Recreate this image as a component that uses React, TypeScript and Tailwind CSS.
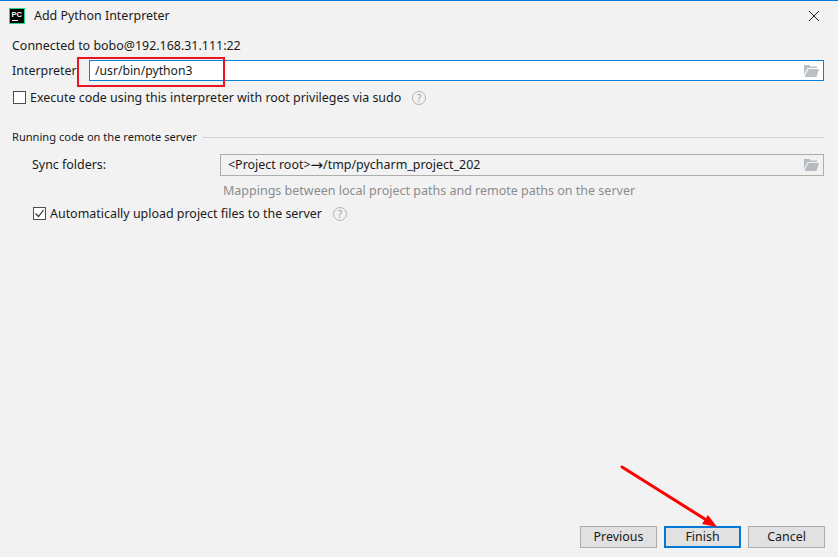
import React from "react";

function Folder({ color }: { color: string }) {
  return (
    <svg width="15" height="12" viewBox="0 0 15 12" className="shrink-0">
      <path d="M0 0 H5.5 L6.5 1.5 H13 V3 H3.5 L0 10 Z" fill={color} />
      <path d="M4.3 4 H15 L12.5 12 H0.5 Z" fill={color} />
    </svg>
  );
}

function Help() {
  return (
    <span className="flex h-[14px] w-[14px] items-center justify-center rounded-full border border-[#b5b5b5] text-[10px] leading-none text-[#9a9a9a]">
      ?
    </span>
  );
}

function Btn({ label, primary }: { label: string; primary?: boolean }) {
  return (
    <button
      className={
        primary
          ? "flex h-[22px] w-[77px] items-center justify-center border-2 border-[#0078d7] bg-[#e1e1e1] text-[#1a1a1a]"
          : "flex h-[22px] w-[77px] items-center justify-center border border-[#adadad] bg-[#e1e1e1] text-[#1a1a1a]"
      }
    >
      {label}
    </button>
  );
}

export default function App() {
  return (
    <div className="relative flex h-[557px] w-[838px] flex-col overflow-hidden border-t border-[#0078d7] bg-[#f2f2f2] font-['Noto_Sans',sans-serif] text-[12.45px] leading-[18px] text-[#1a1a1a]">
      {/* title bar */}
      <div className="flex h-[30px] shrink-0 items-center pl-[9px] pr-[19px]">
        <svg width="16" height="16" viewBox="0 0 16 16" className="shrink-0">
          <rect width="16" height="16" fill="#21d789" />
          <rect x="1" y="1" width="14" height="14" fill="#000" />
          <rect x="3" y="12" width="6" height="1" fill="#fff" />
          <text x="2.5" y="9" fontSize="7.5" fontWeight="700" fill="#fff" fontFamily="Liberation Sans">PC</text>
        </svg>
        <span className="ml-[9px] flex-1">Add Python Interpreter</span>
        <svg width="10" height="10" viewBox="0 0 10 10">
          <path d="M0 0 L10 10 M10 0 L0 10" stroke="#1a1a1a" strokeWidth="1" />
        </svg>
      </div>

      {/* body */}
      <div className="flex flex-1 flex-col pl-3 pr-[14px]">
        <div className="mt-[6px] h-[18px]">Connected to bobo@192.168.31.111:22</div>

        <div className="mt-[5px] flex h-[21px] items-center">
          <span className="w-[77px]">Interpreter</span>
          <div className="flex h-[21px] flex-1 items-center border border-[#0a7fdc] bg-white pl-[5px] pr-[4px]">
            <span className="flex-1 text-[12.2px]">/usr/bin/python3</span>
            <Folder color="#bcc1c5" />
          </div>
        </div>

        <div className="mt-[10px] flex h-[13px] items-center pl-px">
          <span className="h-[13px] w-[13px] border border-[#4d4d4d] bg-white" />
          <span className="ml-[4px]">Execute code using this interpreter with root privileges via sudo</span>
          <span className="ml-[11px]"><Help /></span>
        </div>

        <div className="mt-[24px] flex h-[18px] items-center">
          <span className="text-[11.1px]">Running code on the remote server</span>
          <span className="ml-[6px] h-px flex-1 bg-[#d0d0d0]" />
        </div>

        <div className="mt-[8px] flex h-[22px] items-center pl-5">
          <span className="w-[188px]">Sync folders:</span>
          <div className="flex h-[22px] flex-1 items-center border border-[#adadad] bg-[#f2f2f2] pl-[7px] pr-[4px]">
            <span className="flex flex-1 items-center">
              &lt;Project root&gt;
              <span className="font-['DejaVu_Sans',sans-serif] text-[15px]">→</span>
              /tmp/pycharm_project_202
            </span>
            <Folder color="#b4bac0" />
          </div>
        </div>

        <div className="mt-[6px] h-[18px] pl-[211px] text-[12.5px] text-[#8c8c8c]">Mappings between local project paths and remote paths on the server</div>

        <div className="mt-[7px] flex h-[13px] items-center pl-[21px]">
          <span className="flex h-[13px] w-[13px] items-center justify-center border border-[#4d4d4d] bg-white">
            <svg width="11" height="11" viewBox="0 0 11 11">
              <path d="M1.5 5.5 L4.5 8.5 L9.5 2" fill="none" stroke="#333" strokeWidth="1.2" />
            </svg>
          </span>
          <span className="ml-[4px]">Automatically upload project files to the server</span>
          <span className="ml-[11px]"><Help /></span>
        </div>

        <div className="mb-[9px] mr-[-1px] mt-auto flex justify-end gap-[7px]">
          <Btn label="Previous" />
          <Btn label="Finish" primary />
          <Btn label="Cancel" />
        </div>
      </div>

      {/* annotations */}
      <div className="absolute left-[77px] top-[56px] h-[30px] w-[148px] border-2 border-[#ea1520]" />
      <svg className="absolute left-0 top-[-1px]" width="838" height="557" viewBox="0 0 838 557">
        <path d="M622 467 L708 521" stroke="#ff0000" strokeWidth="3" strokeLinecap="round" />
        <path d="M717 527 L702 524 L708 515 Z" fill="#ff0000" />
      </svg>
    </div>
  );
}
